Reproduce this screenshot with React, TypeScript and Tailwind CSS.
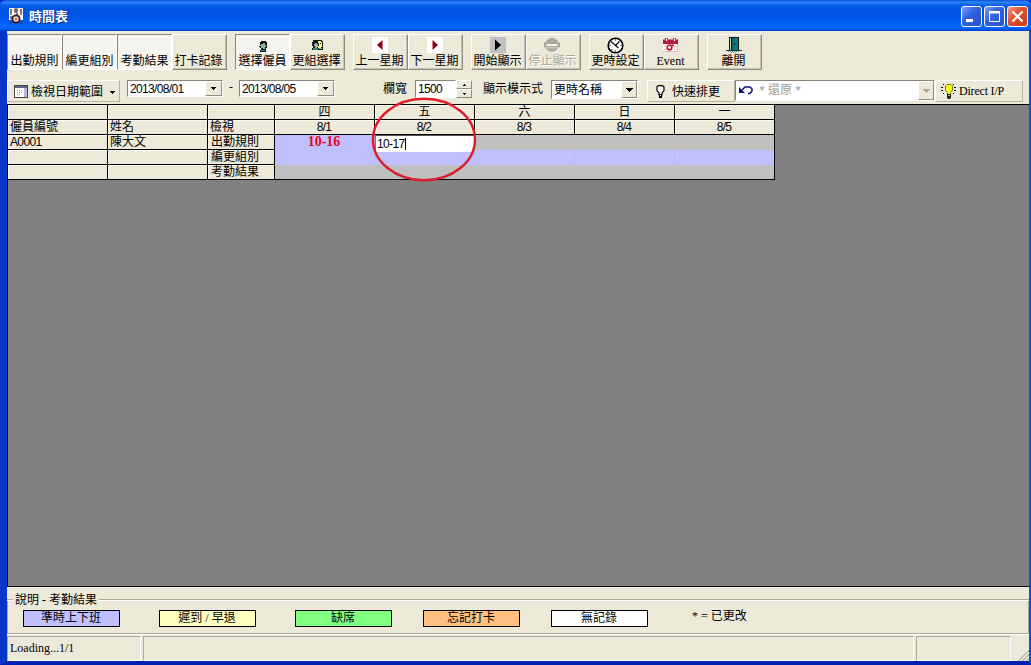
import React from "react";

const raised = "border border-t-white border-l-white border-b-[#8f8c7c] border-r-[#8f8c7c]";
const sunken = "border border-t-[#87847a] border-l-[#87847a] border-b-white border-r-white";
const digits = "font-['Liberation_Sans','Noto_Sans_CJK_TC',sans-serif] tracking-[-0.65px]";

function PersonIcon({ pair }: { pair?: boolean }) {
  return pair ? (
    <svg width="16" height="16" viewBox="0 0 16 16" shapeRendering="crispEdges">
      <path d="M4 3h9v1h1v9H3v-2h1V9H3V5h1z" fill="#151a18" />
      <path d="M9 4h3v1h1v5h-1v1H9V9h1V6H9z" fill="#fff38a" />
      <path d="M11 6h1v1h-1z" fill="#111" />
      <path d="M6 6h2v1h1v3H8v1H6V9H5V7h1z" fill="#9ab0a0" />
      <path d="M4 11h5v2H4z" fill="#1d8f7c" />
      <path d="M10 11h3v1h-3z" fill="#5fc0b0" />
    </svg>
  ) : (
    <svg width="16" height="16" viewBox="0 0 16 16" shapeRendering="crispEdges">
      <path d="M6 3h5v1h1v6h-1v4H5v-2h1v-2H5V9H4V8h1V4h1z" fill="#10161a" />
      <path d="M6 6h2V5h2v2h1v2h-1v2H8v-1H6V8H5V7h1z" fill="#8fb09c" />
      <path d="M6 12h4v1H6z" fill="#1d9f8c" />
    </svg>
  );
}

function ArrowIcon({ left }: { left?: boolean }) {
  return (
    <svg width="16" height="16" viewBox="0 0 16 16">
      <path d="M0 0h16v16H0z" fill="#fff" />
      <path d={left ? "M10.500 3v10L5 8z" : "M5.500 3v10L11 8z"} fill="#8b0010" />
    </svg>
  );
}

function PlayIcon() {
  return (
    <svg width="16" height="16" viewBox="0 0 16 16">
      <path d="M0 0h16v16H0z" fill="#c0c0c0" />
      <path d="M5 2.500v11l6-5.500z" fill="#000" />
    </svg>
  );
}

function StopIcon() {
  return (
    <svg width="17" height="16" viewBox="0 0 17 16">
      <circle cx="9" cy="9" r="6.800" fill="#fff" />
      <circle cx="8" cy="8" r="7" fill="#aca899" />
      <path d="M0 5.500h16v5H0z" fill="#aca899" />
      <path d="M2.500 7h11v2h-11z" fill="#f4f2e8" />
      <path d="M1 10.500h14v.8H1z" fill="#e4e1d2" />
    </svg>
  );
}

function ClockIcon() {
  return (
    <svg width="17" height="17" viewBox="0 0 17 17">
      <circle cx="8.500" cy="8.500" r="7.300" fill="#fff" stroke="#000" strokeWidth="1.600" />
      <path d="M4 4.500l4.500 4 4-4M8.500 8.500l3 2.500" stroke="#000" fill="none" strokeWidth="1.200" />
      <path d="M8 2.500h1v1H8zM8 13.500h1v1H8zM2.500 8h1v1h-1zM13.500 8h1v1h-1zM4.500 12h1v1h-1z" fill="#000" />
    </svg>
  );
}

function EventIcon() {
  return (
    <svg width="17" height="16" viewBox="0 0 17 16">
      <path d="M1 3h15v12H1z" fill="#d9b9c4" />
      <path d="M1 6h14v8H1z" fill="#fff" />
      <path d="M1 2.500h15V7H1z" fill="#b8193a" />
      <path d="M3 1h3v3.500H3zM11 1h3v3.500h-3z" fill="#c23552" />
      <path d="M4 1.500h1V4H4zM12 1.500h1V4h-1z" fill="#fff" />
      <path d="M2 9h2v1H2zM2 12h2v1H2zM12 12h2v1h-2zM12 9h2v1h-2z" fill="#e3b5be" />
      <circle cx="7.500" cy="10.500" r="2.300" fill="none" stroke="#c01228" strokeWidth="1.700" />
      <path d="M9.500 7.500H12V9H9.500z" fill="#c01228" />
    </svg>
  );
}

function DoorIcon() {
  return (
    <svg width="18" height="16" viewBox="0 0 18 16" shapeRendering="crispEdges">
      <path d="M4 0h10v13H4z" fill="#111" />
      <path d="M5 1h1v12H5z" fill="#d9d5b5" />
      <path d="M7 1h6v12H7z" fill="#007d7d" />
      <path d="M7 1h1v12H7z" fill="#04595c" />
      <path d="M9 6h1v2H9z" fill="#111" />
      <path d="M1 13h16v1H1z" fill="#043" />
      <path d="M3 14h1v1H3zM5 14h1v1H5zM7 14h1v1H7zM9 14h1v1H9zM11 14h1v1h-1zM13 14h1v1h-1zM6 15h1v1H6zM8 15h1v1H8zM10 15h1v1h-1z" fill="#7a8c8c" />
    </svg>
  );
}

function ToolButton({ label, icon, pressed, disabled }: { label: string; icon?: React.ReactNode; pressed?: boolean; disabled?: boolean }) {
  return (
    <div
      className={`flex h-[36px] w-[55px] flex-col items-center ${
        pressed
          ? "border border-t-[#87847a] border-l-[#87847a] border-b-white border-r-white bg-[#f5f4ee] pt-[3px]"
          : `${raised} pt-[2px] pr-[2px] shadow-[inset_-1px_-1px_0_#c5c2b2]`
      }`}
    >
      <div className="flex h-[16px] shrink-0 items-center justify-center">{icon}</div>
      <span
        className={`whitespace-nowrap text-[12px] leading-[14px] ${pressed ? "" : "pt-px"} ${
          disabled ? "text-[#aca899] [text-shadow:1px_1px_0_#fff]" : ""
        }`}
      >
        {label}
      </span>
    </div>
  );
}

function DropButton({ wide, disabled }: { wide?: boolean; disabled?: boolean }) {
  return (
    <div className={`flex shrink-0 items-center justify-center bg-[#ece9d8] ${raised} ${wide ? "w-[16px]" : "w-[17px]"}`}>
      <svg width="7" height="4" viewBox="0 0 7 4" shapeRendering="crispEdges">
        {wide || disabled ? (
          <path d="M0 0h7v1H6v1H5v1H4v1H3V3H2V2H1V1H0z" fill={disabled ? "#aca899" : "#000"} />
        ) : (
          <path d="M1 0h5v1H5v1H4v1H3V2H2V1H1z" fill="#000" />
        )}
      </svg>
    </div>
  );
}

function DateBox({ value }: { value: string }) {
  return (
    <div className={`flex h-[17px] w-[96px] bg-white ${sunken}`}>
      <span className={`flex-1 pl-[2px] text-[12px] leading-[16px] ${digits}`}>{value}</span>
      <DropButton />
    </div>
  );
}

function HeadCell({ children, width, center }: { children?: React.ReactNode; width: string; center?: boolean }) {
  return (
    <div
      className={`h-[15px] shrink-0 whitespace-nowrap border-r border-b border-black bg-[#ece9d8] text-[12px] leading-[14px] shadow-[inset_1px_1px_0_#fbfaf3] ${width} ${
        center ? "text-center" : "pl-[2px]"
      }`}
    >
      {children}
    </div>
  );
}

const days = [
  ["四", "8/1"],
  ["五", "8/2"],
  ["六", "8/3"],
  ["日", "8/4"],
  ["一", "8/5"],
];

const rows = [
  ["A0001", "陳大文", "出勤規則"],
  ["", "", "編更組別"],
  ["", "", "考勤結果"],
];

function Schedule() {
  return (
    <div className="relative h-[483px] border-t border-b border-l border-black bg-[#808080]">
      <div className="flex w-[767px] flex-col">
        {[0, 1].map((line) => (
          <div key={line} className="flex">
            <HeadCell width="w-[100px]">{line ? "僱員編號" : ""}</HeadCell>
            <HeadCell width="w-[100px]">{line ? "姓名" : ""}</HeadCell>
            <HeadCell width="w-[67px]">{line ? "檢視" : ""}</HeadCell>
            {days.map((d) => (
              <HeadCell key={d[1]} width="w-[100px]" center>
                <span className={line ? `${digits} pr-px` : ""}>{d[line]}</span>
              </HeadCell>
            ))}
          </div>
        ))}
        {rows.map((r, i) => (
          <div key={i} className="flex h-[15px]">
            <HeadCell width="w-[100px]">
              <span className={digits}>{r[0]}</span>
            </HeadCell>
            <HeadCell width="w-[100px]">{r[1]}</HeadCell>
            <HeadCell width="w-[67px]">
              <span className="pl-px">{r[2]}</span>
            </HeadCell>
            {days.map((d, c) => (
              <div
                key={c}
                className={`relative h-[15px] w-[100px] ${
                  i === 1 || (i === 0 && c === 0) ? "bg-[#c0c0ff]" : "bg-[#c0c0c0]"
                } ${i === 2 ? "border-b border-black" : ""} ${c === 4 ? "border-r border-r-black" : i === 1 ? "border-r border-r-[#bab9f0]" : ""}`}
              >
                {i === 0 && c === 0 && (
                  <div className="pr-[2px] text-center text-[14px] font-bold leading-[14px] text-[#f0001c]">10-16</div>
                )}
                {i === 0 && c === 1 && (
                  <div className="absolute top-0 left-0 z-10 flex h-[17px] w-[99px] items-center border-t border-l border-t-[#555] border-l-[#777] bg-white pl-px">
                    <span className={`text-[12px] leading-[15px] ${digits}`}>10-17</span>
                    <span className="ml-px h-[12px] w-px bg-black" />
                  </div>
                )}
              </div>
            ))}
          </div>
        ))}
      </div>
      <svg className="absolute top-[-8px] left-[363px] z-20" width="106" height="86" viewBox="0 0 106 86">
        <ellipse cx="53" cy="42.500" rx="51" ry="40.800" fill="none" stroke="#dc1f2e" strokeWidth="2.500" />
      </svg>
    </div>
  );
}

function Legend({ label, tone }: { label: string; tone: string }) {
  return (
    <div className={`h-[17px] w-[97px] border border-black pr-px text-center text-[12px] leading-[14px] whitespace-nowrap ${tone}`}>{label}</div>
  );
}

export default function App() {
  return (
    <div className="flex h-[665px] w-[1031px] flex-col overflow-hidden bg-[#0831d9] font-['Liberation_Serif','Noto_Sans_CJK_TC',serif] text-black">
      <header className="flex h-[31px] shrink-0 items-center rounded-t-[6px] bg-[linear-gradient(180deg,#0a4fd4_0%,#2a86f7_7%,#0a62ea_16%,#0053e1_30%,#0058ee_60%,#0366fd_86%,#0560f5_92%,#003dd0_100%)] pl-[9px]">
        <svg width="15" height="16" viewBox="0 0 15 16">
          <path d="M0 0h14v12H0z" fill="#f5f2f2" />
          <path d="M2 1v4M1 6h2M2 8v3M6 1h2v3H6zM8 5v2M12 1v4M11 6h2M11 2h1" stroke="#402828" strokeWidth="1.200" fill="none" />
          <circle cx="7" cy="11" r="3.600" fill="#f3dede" stroke="#3d1717" strokeWidth="1.800" />
          <circle cx="7" cy="11" r="1.100" fill="#b02222" />
          <path d="M3 14l-2 1.500M11 14l2 1.500" stroke="#3d1717" />
        </svg>
        <h1 className="ml-[5px] flex-1 pt-[2px] text-[13px] leading-[16px] font-bold text-white [text-shadow:1px_1px_0_#0a2a80]">時間表</h1>
        <div className="mr-[3px] flex gap-[2px] pt-[2px]">
          <div className="h-[21px] w-[21px] rounded-[3px] border border-white bg-[linear-gradient(135deg,#7f9df0,#3364e0_40%,#2450cf)]">
            <svg width="19" height="19" viewBox="0 0 19 19">
              <path d="M4 12h7v3H4z" fill="#fff" />
            </svg>
          </div>
          <div className="h-[21px] w-[21px] rounded-[3px] border border-white bg-[linear-gradient(135deg,#7f9df0,#3364e0_40%,#2450cf)]">
            <svg width="19" height="19" viewBox="0 0 19 19">
              <path d="M4.500 5h10v9.500h-10z" fill="none" stroke="#fff" />
              <path d="M4 4h11v2.500H4z" fill="#fff" />
            </svg>
          </div>
          <div className="h-[21px] w-[21px] rounded-[3px] border border-white bg-[linear-gradient(135deg,#f0a080,#e0532f_40%,#c93a14)]">
            <svg width="19" height="19" viewBox="0 0 19 19">
              <path d="M4.500 4.500l10 10M14.500 4.500l-10 10" stroke="#fff" strokeWidth="2.200" />
            </svg>
          </div>
        </div>
      </header>

      <div className="flex min-h-0 flex-1 border-r-2 border-b-4 border-l-[7px] border-r-[#0a50e0] border-b-[#0020b0] border-l-[#0836c8]">
        <main className="flex min-w-0 flex-1 flex-col bg-[#ece9d8]">
          <div className="flex h-[49px] shrink-0 items-start gap-[8px] pt-[3px]">
            <div className="flex">
              <ToolButton label="出勤規則" pressed />
              <ToolButton label="編更組別" pressed />
              <ToolButton label="考勤結果" pressed />
              <ToolButton label="打卡記錄" />
            </div>
            <div className="flex">
              <ToolButton label="選擇僱員" pressed icon={<PersonIcon />} />
              <ToolButton label="更組選擇" icon={<PersonIcon pair />} />
            </div>
            <div className="flex">
              <ToolButton label="上一星期" icon={<ArrowIcon left />} />
              <ToolButton label="下一星期" icon={<ArrowIcon />} />
            </div>
            <div className="flex">
              <ToolButton label="開始顯示" icon={<PlayIcon />} />
              <ToolButton label="停止顯示" disabled icon={<StopIcon />} />
            </div>
            <div className="flex">
              <ToolButton label="更時設定" icon={<ClockIcon />} />
              <ToolButton label="Event" icon={<EventIcon />} />
            </div>
            <ToolButton label="離開" icon={<DoorIcon />} />
          </div>

          <div className="flex h-[24px] shrink-0 items-start text-[12px] whitespace-nowrap">
            <div className="flex h-[22px] w-[113px] items-center border border-t-white border-l-white border-b-[#b5b2a2] border-r-[#b5b2a2] pl-[6px]">
              <svg width="14" height="13" viewBox="0 0 14 13" shapeRendering="crispEdges">
                <path d="M0 0h14v13H0z" fill="#444" />
                <path d="M1 3h12v9H1z" fill="#fff" />
                <path d="M1 1h12v2H1z" fill="#62668f" />
                <path d="M3 5h1v1H3zM5 5h1v1H5zM7 5h1v1H7zM3 7h1v1H3zM5 7h1v1H5zM7 7h1v1H7zM3 9h1v1H3zM5 9h1v1H5z" fill="#99a" />
                <path d="M10 3h3v9h-3z" fill="#b8b8d8" />
              </svg>
              <span className="ml-[3px] pt-px leading-[20px]">檢視日期範圍</span>
              <svg className="mt-[2px] ml-[7px]" width="5" height="3" viewBox="0 0 5 3" shapeRendering="crispEdges">
                <path d="M0 0h5v1H4v1H3v1H2V2H1V1H0z" />
              </svg>
            </div>
            <div className="ml-[7px]">
              <DateBox value="2013/08/01" />
            </div>
            <span className="w-[16px] text-center leading-[14px]">-</span>
            <DateBox value="2013/08/05" />
            <span className="ml-[48px] w-[32px] pt-px leading-[17px]">欄寬</span>
            <div className={`flex h-[18px] w-[41px] bg-white ${sunken}`}>
              <span className={`pl-[2px] leading-[16px] ${digits}`}>1500</span>
            </div>
            <div className="flex h-[18px] w-[16px] flex-col">
              <div className={`flex h-[9px] items-center justify-center ${raised}`}>
                <svg width="3" height="2" viewBox="0 0 3 2" shapeRendering="crispEdges">
                  <path d="M1 0h1v1h1v1H0V1h1z" />
                </svg>
              </div>
              <div className={`flex h-[9px] items-center justify-center ${raised}`}>
                <svg width="3" height="2" viewBox="0 0 3 2" shapeRendering="crispEdges">
                  <path d="M0 0h3v1H2v1H1V1H0z" />
                </svg>
              </div>
            </div>
            <span className="ml-[11px] w-[68px] pt-px leading-[17px]">顯示模示式</span>
            <div className={`flex h-[19px] w-[87px] bg-white ${sunken}`}>
              <span className="flex-1 pl-[2px] leading-[18px]">更時名稱</span>
              <DropButton wide />
            </div>
            <div className="ml-[9px] flex h-[22px] w-[88px] items-center border border-t-white border-l-white border-b-[#b5b2a2] border-r-[#b5b2a2] pl-[8px]">
              <svg width="9" height="13" viewBox="0 0 9 13">
                <path d="M1 1.500L2.500.7h4L8 2v3.500L6 8v2H3V8L1 5.500z" fill="#fff" stroke="#000" strokeWidth="1.200" />
                <path d="M3 9h3v4H3z" fill="#000" />
                <path d="M4 10h1v1H4z" fill="#fff" />
              </svg>
              <span className="ml-[7px] pt-px leading-[20px]">快速排更</span>
            </div>
            <div className={`flex h-[21px] w-[200px] bg-white ${sunken}`}>
              <svg className="mt-[4px] ml-[3px]" width="14" height="10" viewBox="0 0 14 10">
                <path d="M3 5l3-3h5l2 2v2l-2 2.500H9" fill="none" stroke="#10107a" strokeWidth="1.500" />
                <path d="M0 2v6h6z" fill="#10107a" />
              </svg>
              <span className="flex-1 pl-[6px] leading-[19px] text-[#9c9a8e]">* 還原 *</span>
              <DropButton wide disabled />
            </div>
            <div className="flex h-[22px] w-[88px] items-center border border-t-white border-l-white border-b-[#b5b2a2] border-r-[#b5b2a2] pl-[5px]">
              <svg width="15" height="15" viewBox="0 0 15 15">
                <path d="M0 3.500h2M0 6.500h2M13 3.500h2M13 6.500h2M2 0l1 1M13 0l-1 1M2 10l1-1M13 10l-1-1" stroke="#000" />
                <path d="M4.500 2l1.500-1.500h4L11.500 2v4l-2 2.500v2h-3v-2L4.500 6z" fill="#ffff20" stroke="#77771a" />
                <path d="M6 10h4v4l-1 1H7l-1-1z" fill="#222" />
                <path d="M7 11h2v1H7z" fill="#bbb" />
              </svg>
              <span className="ml-[3px] tracking-[-0.200px] leading-[20px]">Direct I/P</span>
            </div>
          </div>

          <Schedule />

          <section className="flex h-[47px] shrink-0 flex-col pt-[6px] text-[12px]">
            <div className="flex h-[14px] items-center">
              <div className="h-[2px] w-[6px] border-t border-b border-t-[#aca899] border-b-white" />
              <span className="px-[2px] leading-[14px]">說明 - 考勤結果</span>
              <div className="h-[2px] flex-1 border-t border-b border-t-[#aca899] border-b-white" />
            </div>
            <div className="-mt-[6px] h-[33px] border-r border-b border-l border-[#aca899] pt-[9px] pl-[15px] shadow-[0_1px_0_#fff]">
              <div className="flex">
                <Legend label="準時上下班" tone="bg-[#c0c0ff]" />
                <div className="ml-[39px]">
                  <Legend label="遲到 / 早退" tone="bg-[#ffffc0]" />
                </div>
                <div className="ml-[39px]">
                  <Legend label="缺席" tone="bg-[#80ff80]" />
                </div>
                <div className="ml-[31px]">
                  <Legend label="忘記打卡" tone="bg-[#ffc080]" />
                </div>
                <div className="ml-[31px]">
                  <Legend label="無記錄" tone="bg-white" />
                </div>
                <span className="ml-[44px] leading-[13px]">* = 已更改</span>
              </div>
            </div>
          </section>

          <footer className="flex min-h-0 flex-1 gap-[2px] pt-[2px] text-[12px]">
            <div className="w-[134px] border border-t-[#aca899] border-l-[#aca899] border-r-white border-b-white pl-[2px] leading-[23px]">Loading...1/1</div>
            <div className="w-[771px] border border-t-[#aca899] border-l-[#aca899] border-r-white border-b-white" />
            <div className="w-[95px] border border-t-[#aca899] border-l-[#aca899] border-r-white border-b-white" />
            <div className="flex flex-1 items-end justify-end">
              <svg width="12" height="12" viewBox="0 0 12 12">
                <path d="M1 12L12 1M5 12l7-7M9 12l3-3" stroke="#aca899" strokeWidth="1.500" />
                <path d="M0 12L12 0M4 12l8-8M8 12l4-4" stroke="#fff" strokeWidth=".7" />
              </svg>
            </div>
          </footer>
        </main>
      </div>
    </div>
  );
}
